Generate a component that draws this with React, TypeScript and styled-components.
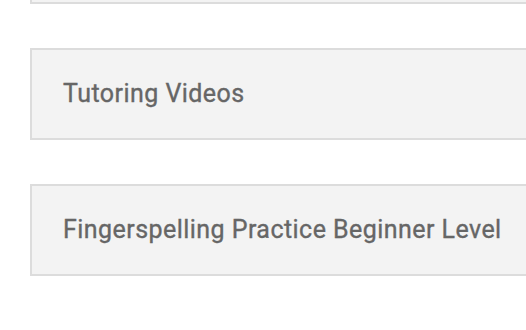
import styled, { createGlobalStyle } from 'styled-components';

const GlobalStyle = createGlobalStyle`
  html, body {
    margin: 0;
    padding: 0;
    background: #fff;
    overflow: hidden;
  }
  body {
    font-family: Roboto, "Noto Sans", Arial, sans-serif;
  }
`;

const lessons = ['Conversation Practice', 'Tutoring Videos', 'Fingerspelling Practice Beginner Level'];

const App = () => {
  return (
    <>
      <GlobalStyle />
      <SList>
        {lessons.map((title) => (
          <SCard key={title}>
            <STitle>{title}</STitle>
          </SCard>
        ))}
      </SList>
    </>
  );
};

export default App;

const SList = styled.div`
  display: flex;
  flex-direction: column;
  gap: 44px;
  margin-top: -88px;
  padding-left: 30px;
`;

const SCard = styled.div`
  display: flex;
  align-items: center;
  box-sizing: border-box;
  width: 560px;
  height: 92px;
  padding: 0 0 1px 31px;
  background-color: #f3f3f3;
  border: 2px solid #dcdcdc;
`;

const STitle = styled.h3`
  margin: 0;
  font-size: 25px;
  font-weight: 400;
  letter-spacing: 0.45px;
  color: #666;
  white-space: nowrap;
  -webkit-text-stroke: 0.35px #666;
`;
